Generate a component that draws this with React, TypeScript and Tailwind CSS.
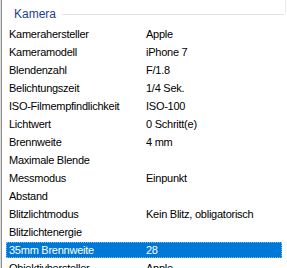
const rows: [string, string][] = [
  ["Kamerahersteller", "Apple"],
  ["Kameramodell", "iPhone 7"],
  ["Blendenzahl", "F/1.8"],
  ["Belichtungszeit", "1/4 Sek."],
  ["ISO-Filmempfindlichkeit", "ISO-100"],
  ["Lichtwert", "0 Schritt(e)"],
  ["Brennweite", "4 mm"],
  ["Maximale Blende", ""],
  ["Messmodus", "Einpunkt"],
  ["Abstand", ""],
  ["Blitzlichtmodus", "Kein Blitz, obligatorisch"],
  ["Blitzlichtenergie", ""],
  ["35mm Brennweite", "28"],
  ["Objektivhersteller", "Apple"],
];

const SELECTED = 12;

export default function App() {
  return (
    <div
      className="relative h-[268px] w-[287px] overflow-hidden border-l border-[#dcdcdc] bg-white text-[11px] tracking-[-0.25px] text-black"
      style={{ fontFamily: '"Liberation Sans", Arial, sans-serif' }}
    >
      <div className="h-full border-l border-[#8e8e8e]">
        {/* group header */}
        <div className="flex h-[24px] items-start pt-[5px]">
          <div className="flex h-[18px] w-full items-center pl-[12px] pr-[3px]">
            <span className="text-[12px] tracking-normal text-[#1e3e92]">Kamera</span>
            <div className="ml-[6px] h-px flex-1 bg-[#e2e2e2]" />
          </div>
        </div>
        <div className="absolute right-[1px] top-0 h-[14px] w-px bg-[#ececec]" />

        {rows.map(([label, value], i) => {
          const sel = i === SELECTED;
          return (
            <div key={label} className="h-[18px] pl-[4px] pr-[5px] pt-[2px]">
              <div
                className={
                  sel
                    ? "flex h-[16px] items-center border border-dotted border-[#7db8ef] bg-[#0078d7] text-white"
                    : "flex h-[16px] items-center border border-transparent"
                }
              >
                <div className="w-[137px] shrink-0 pl-[2px] whitespace-nowrap">{label}</div>
                <div className="pl-[2px] whitespace-nowrap">{value}</div>
              </div>
            </div>
          );
        })}
      </div>
    </div>
  );
}
